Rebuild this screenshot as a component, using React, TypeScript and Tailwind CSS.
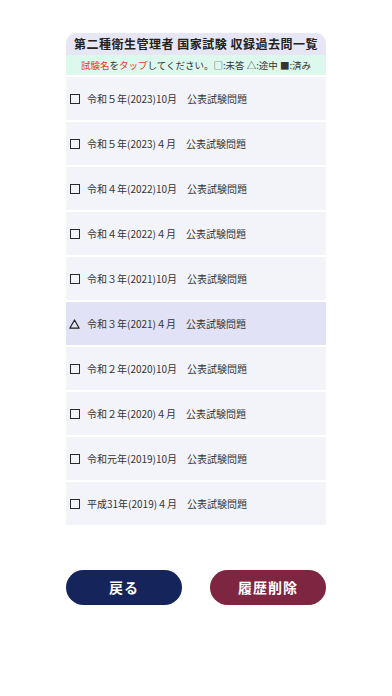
import React from 'react';

type Exam = {
  label: string;
  status: 'none' | 'partial' | 'done';
};

const exams: Exam[] = [
  { label: '令和５年(2023)10月　公表試験問題', status: 'none' },
  { label: '令和５年(2023)４月　公表試験問題', status: 'none' },
  { label: '令和４年(2022)10月　公表試験問題', status: 'none' },
  { label: '令和４年(2022)４月　公表試験問題', status: 'none' },
  { label: '令和３年(2021)10月　公表試験問題', status: 'none' },
  { label: '令和３年(2021)４月　公表試験問題', status: 'partial' },
  { label: '令和２年(2020)10月　公表試験問題', status: 'none' },
  { label: '令和２年(2020)４月　公表試験問題', status: 'none' },
  { label: '令和元年(2019)10月　公表試験問題', status: 'none' },
  { label: '平成31年(2019)４月　公表試験問題', status: 'none' },
];

function StatusIcon({ status }: { status: Exam['status'] }) {
  if (status === 'partial') {
    return (
      <svg width="11" height="10" viewBox="0 0 11 10" className="shrink-0">
        <path d="M5.5 1 L10.2 9.2 L0.8 9.2 Z" fill="none" stroke="#222" strokeWidth="1.2" strokeLinejoin="round" />
      </svg>
    );
  }
  if (status === 'done') {
    return <span className="w-[9px] h-[9px] bg-[#222] shrink-0" />;
  }
  return <span className="w-[10px] h-[10px] border-[1.5px] border-[#2a2a2a] shrink-0" />;
}

export default function App() {
  return (
    <div
      className="w-[392px] h-[696px] bg-white flex flex-col items-center"
      style={{ fontFamily: '"Noto Sans CJK JP", "Noto Sans", sans-serif' }}
    >
      <div className="w-[260px] mt-[33px]">
        {/* HEADER */}
        <div className="rounded-t-[10px] overflow-hidden">
          <div className="h-[22px] bg-[#e6e6f5] flex items-center justify-center">
            <h1 className="text-[12px] font-bold text-[#222] tracking-[0.5px]">
              第二種衛生管理者 国家試験 収録過去問一覧
            </h1>
          </div>
          <div className="h-[20px] bg-[#ddf8ec] flex items-center justify-center">
            <p className="text-[9.5px] text-[#333]">
              <span className="text-[#e8342e]">試験名</span>を
              <span className="text-[#e8342e]">タップ</span>
              してください。□:未答 △:途中 ■:済み
            </p>
          </div>
        </div>

        {/* LIST */}
        <div className="flex flex-col">
          {exams.map((exam) => (
            <div
              key={exam.label}
              className={
                'h-[43px] mt-[2px] flex items-center gap-[7px] pl-[3px] ' +
                (exam.status === 'partial' ? 'bg-[#e1e2f5]' : 'bg-[#f3f3fa]')
              }
            >
              <div className="w-[11px] flex items-center justify-center">
                <StatusIcon status={exam.status} />
              </div>
              <span className="text-[10px] text-[#333]">{exam.label}</span>
            </div>
          ))}
        </div>

        {/* BUTTONS */}
        <div className="flex justify-between mt-[45px]">
          <button className="w-[116px] h-[35px] rounded-full bg-[#15245a] text-white text-[14px] font-bold tracking-[1px]">
            戻る
          </button>
          <button className="w-[116px] h-[35px] rounded-full bg-[#7e2541] text-white text-[14px] font-bold tracking-[1px]">
            履歴削除
          </button>
        </div>
      </div>
    </div>
  );
}
